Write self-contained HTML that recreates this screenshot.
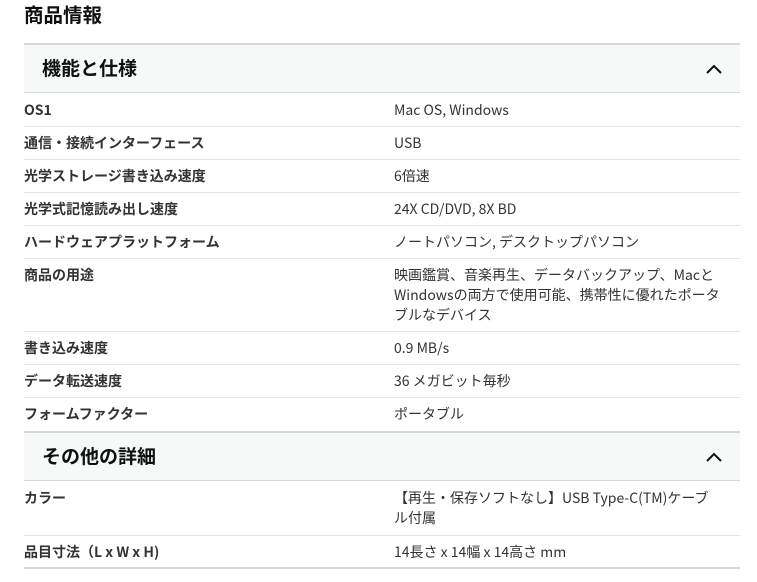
<!DOCTYPE html>
<html><head><meta charset="utf-8"><style>
*{margin:0;padding:0;box-sizing:border-box}
body{width:757px;height:582px;background:#fff;font-family:"Noto Sans CJK JP","Liberation Sans",sans-serif;color:#0f1111;overflow:hidden;position:relative}
h1{position:absolute;left:24px;top:1px;font-size:19.5px;font-weight:bold;line-height:26px}
.hdr{position:absolute;left:24px;width:716px;height:50px;background:#f7f8f8;border-top:2px solid #d5d9d9;border-bottom:1px solid #d5d9d9}
.hdr span{position:absolute;left:18px;top:10px;font-size:19px;font-weight:bold;line-height:26px}
.hdr svg{position:absolute;right:17px;top:19px}
.row{position:absolute;left:24px;width:716px;border-bottom:1px solid #e3e6e6;font-size:14px;line-height:20px}
.row .k{position:absolute;left:0;top:6px;font-weight:bold;color:#333}
.row .v{position:absolute;left:370px;top:6px;width:340px;color:#333;white-space:nowrap}
</style></head><body>
<h1>商品情報</h1>
<div class="hdr" style="top:43px"><span>機能と仕様</span><svg width="18" height="11" viewBox="0 0 18 11"><path d="M2 9 L9 2 L16 9" fill="none" stroke="#0f1111" stroke-width="2"/></svg></div>
<div class="row" style="top:94px;height:33px"><div class="k">OS1</div><div class="v">Mac OS, Windows</div></div>
<div class="row" style="top:127px;height:33px"><div class="k">通信・接続インターフェース</div><div class="v">USB</div></div>
<div class="row" style="top:160px;height:33px"><div class="k">光学ストレージ書き込み速度</div><div class="v">6倍速</div></div>
<div class="row" style="top:193px;height:33px"><div class="k">光学式記憶読み出し速度</div><div class="v">24X CD/DVD, 8X BD</div></div>
<div class="row" style="top:226px;height:33px"><div class="k">ハードウェアプラットフォーム</div><div class="v">ノートパソコン, デスクトップパソコン</div></div>
<div class="row" style="top:259px;height:73px"><div class="k">商品の用途</div><div class="v">映画鑑賞、音楽再生、データバックアップ、Macと<br>Windowsの両方で使用可能、携帯性に優れたポータ<br>ブルなデバイス</div></div>
<div class="row" style="top:332px;height:33px"><div class="k">書き込み速度</div><div class="v">0.9 MB/s</div></div>
<div class="row" style="top:365px;height:33px"><div class="k">データ転送速度</div><div class="v">36 メガビット毎秒</div></div>
<div class="row" style="top:398px;height:33px;border-bottom:none"><div class="k">フォームファクター</div><div class="v">ポータブル</div></div>
<div class="hdr" style="top:431px"><span>その他の詳細</span><svg width="18" height="11" viewBox="0 0 18 11"><path d="M2 9 L9 2 L16 9" fill="none" stroke="#0f1111" stroke-width="2"/></svg></div>
<div class="row" style="top:482px;height:54px"><div class="k">カラー</div><div class="v">【再生・保存ソフトなし】USB Type-C(TM)ケーブ<br>ル付属</div></div>
<div class="row" style="top:536px;height:33px;border-bottom:2px solid #d5d9d9"><div class="k">品目寸法（L x W x H)</div><div class="v">14長さ x 14幅 x 14高さ mm</div></div>
</body></html>
